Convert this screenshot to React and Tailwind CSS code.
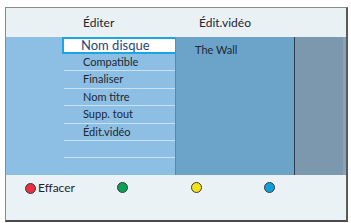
import React from 'react'

const items = ['Nom disque', 'Compatible', 'Finaliser', 'Nom titre', 'Supp. tout', 'Édit.vidéo', '', '']

function Dot({ color }) {
  return <span className={`w-[11px] h-[11px] rounded-full border border-[#3a3a3a] shrink-0 ${color}`} />
}

export default function App() {
  return (
    <div
      className="w-[351px] h-[223px] bg-white pt-[7px] pl-[5px]"
      style={{ fontFamily: 'Lato, "Open Sans", sans-serif' }}
    >
      <div className="w-[343px] h-[215px] flex flex-col border-l border-t border-[#8a8a8a] border-r-2 border-b-2 border-r-[#5a5a5a] border-b-[#4a4a4a] bg-[#ebf2f6]">
        {/* Header */}
        <div className="h-[29px] flex items-center text-[12px] text-[#1c2530] bg-[#e9f1f5]">
          <div className="w-[77px]" />
          <div className="w-[114px]">Éditer</div>
          <div className="pl-[2px]">Édit.vidéo</div>
        </div>

        {/* Main panels */}
        <div className="h-[138px] flex">
          <div className="w-[56px] bg-[#8dbee3]" />
          <div className="w-[114px] bg-[#8dbee3] flex flex-col border-r border-r-[#5f86a6]">
            {items.map((t, i) =>
              i === 0 ? (
                <div
                  key={i}
                  className="h-[17px] bg-white border-2 border-[#1aa6e0] pl-[17px] flex items-center text-[13px] text-[#1e4a7c] -mr-[2px]"
                >
                  {t}
                </div>
              ) : (
                <div
                  key={i}
                  className={`h-[17.4px] flex items-center pl-[19px] text-[11px] text-[#1c2833] ml-[2px] ${
                    i < items.length - 1 ? 'border-b border-b-[#c9e1f4]' : ''
                  }`}
                >
                  {t}
                </div>
              )
            )}
          </div>
          <div className="w-[118px] bg-[#6ca4c9] pl-[19px] pt-[5px] text-[11px] text-[#1c2833]">
            The Wall
          </div>
          <div className="flex-1 bg-[#7b98ae] border-l border-l-[#2f3f4c] border-r-[3px] border-r-[#8aa3b6]" />
        </div>

        {/* Colour buttons */}
        <div className="flex-1 flex items-start pt-[4px] text-[12px] text-[#1c2530]">
          <div className="w-[111px] pl-[19px] flex items-center gap-[2px]">
            <Dot color="bg-[#e8303f]" />
            <span>Effacer</span>
          </div>
          <div className="w-[74px] flex items-center h-[17px]">
            <Dot color="bg-[#0aa05a]" />
          </div>
          <div className="w-[73px] flex items-center h-[17px]">
            <Dot color="bg-[#f5e21a]" />
          </div>
          <div className="flex items-center h-[17px]">
            <Dot color="bg-[#10a0dc]" />
          </div>
        </div>
      </div>
    </div>
  )
}
